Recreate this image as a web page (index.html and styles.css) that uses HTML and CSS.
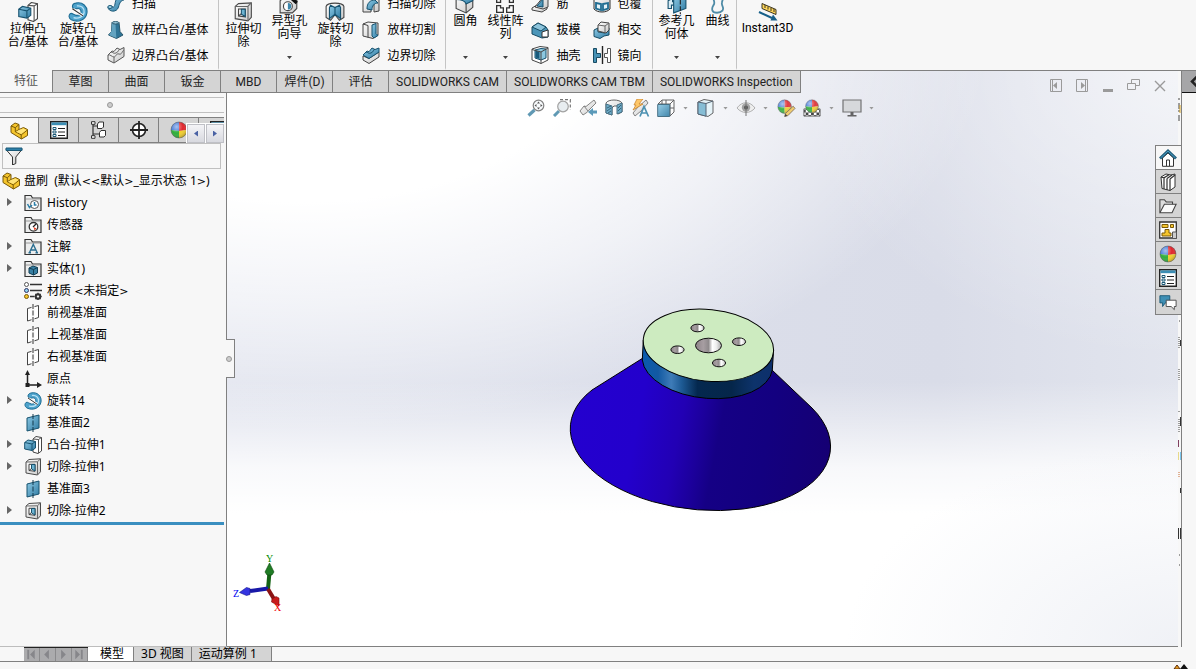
FILE: index.html
```
<!DOCTYPE html>
<html lang="zh-CN">
<head>
<meta charset="utf-8">
<title>盘刷</title>
<link rel="stylesheet" href="styles.css">
</head>
<body>
<svg class="defs" aria-hidden="true">
  <defs>
    <linearGradient id="blue" x1="0" y1="0" x2="1" y2="1"><stop offset="0" stop-color="#8fcbe6"/><stop offset="1" stop-color="#2f7ba3"/></linearGradient>
    <linearGradient id="metal" x1="0" y1="0" x2="1" y2="1"><stop offset="0" stop-color="#fff"/><stop offset="1" stop-color="#c9c9c9"/></linearGradient>
    <clipPath id="ballclip"><circle cx="9" cy="9" r="8"/></clipPath>
    <radialGradient id="shine" cx=".35" cy=".3" r=".8"><stop offset="0" stop-color="#fff" stop-opacity=".55"/><stop offset=".5" stop-color="#fff" stop-opacity="0"/><stop offset="1" stop-color="#000" stop-opacity=".35"/></radialGradient>
    <pattern id="check" width="6" height="6" patternUnits="userSpaceOnUse"><rect width="6" height="6" fill="#fff"/><path d="M0 0h3v3H0zM3 3h3v3H3z" fill="#333"/></pattern>
  </defs>
  <symbol id="boss" viewBox="0 0 18 18"><path d="M9 3l3-2.500 5.500 1V15L14 17.500 9 16z" fill="#fff" stroke="#444"/><path d="M14.500 3.500V17M9 3l5.500 .5 3-2" fill="none" stroke="#555"/><path d="M.7 6.500L4 4l7.500 1.500V12L8 14.500 .7 13z" fill="url(#blue)" stroke="#17526f"/><path d="M.7 6.500L8 8l3.500-2.500M8 8v6.500" fill="none" stroke="#17526f"/></symbol>
  <symbol id="revolve" viewBox="0 0 18 18"><path d="M7 1C13-.5 18 4 17 10 16 16 9 19 3 16 .5 14.500 .5 12 2 10.500 3.500 9.500 5 11.500 7.500 12 10.500 12.300 12.300 10 11.500 7.500 11 6 9.500 5.500 8 6 5.500 6.500 4 5.500 4 4 4 2.500 5.300 1.300 7 1z" fill="#4ea3cc" stroke="#1d6d95"/><path d="M8 3.500c4-.5 7 2 6.500 6-.5 3.500-5 6-9.500 4.500" fill="none" stroke="#b9e2f5" stroke-width="1.200"/><path d="M4.500 6.500L13 12" stroke="#fff" stroke-width="2.500"/><path d="M4 6l9.500 6.500" stroke="#333"/></symbol>
  <symbol id="sweep" viewBox="0 0 18 18"><path d="M1 12c0 5 9 6 10.500 0C12.500 8 14 5 17 5l-1-4C10 1 8.500 5 8 9c-.5 3.500-2.500 4-3 2z" fill="url(#blue)" stroke="#1b5876"/><ellipse cx="3" cy="12" rx="2.200" ry="1.500" fill="#a7d8ec" stroke="#1b5876"/></symbol>
  <symbol id="loft" viewBox="0 0 18 18"><path d="M5 1.500h7l1 9 3 3.500-6.500 3.500L1.500 14 4.500 10.500z" fill="#2f7496" stroke="#29566b"/><path d="M5 2l3.500 1 .8 14-7.300-3L4.500 10z" fill="#63a3c0"/><ellipse cx="8.500" cy="1.800" rx="3.500" ry="1.200" fill="#a2d1e4" stroke="#29566b"/></symbol>
  <symbol id="bound" viewBox="0 0 18 18"><path d="M1 9l4-4 2 .5L10 2l3 1.500L17 1.500v9L7 17 1 14z" fill="url(#metal)" stroke="#555"/><path d="M1 9c2-1 4 2 6 2s2-4 5-3 3-3 5-4M7 11v6M4 6c2 0 2 2 5 1s2-4 4-3.500" fill="none" stroke="#666"/></symbol>
  <symbol id="boundcut" viewBox="0 0 18 18"><path d="M1 10l6 2.500L17 6v5L7 17.500 1 14z" fill="url(#metal)" stroke="#444"/><path d="M1 9l4-4 2 .7L10 2l3 1.500L17 2v4L7 12.500z" fill="url(#blue)" stroke="#17526f"/><path d="M4 6c2 0 2 2 5 1s2-4 4-3.500" fill="none" stroke="#17526f"/></symbol>
  <symbol id="cut" viewBox="0 0 18 18"><path d="M2 4l3-2.500L16.500 .8v13L13.500 17 2 15z" fill="url(#metal)" stroke="#4a4a4a"/><path d="M2 4l11.500-.2L16.500 .8M13.500 4v13" fill="none" stroke="#666"/><path d="M5 6.300h6v7L5 12.500z" fill="#fff" stroke="#444"/><path d="M7.500 6.500H11v6.500l-3.500-2z" fill="#6db4d2" stroke="#17526f"/><path d="M5 12.500l2.500-2" fill="none" stroke="#444"/></symbol>
  <symbol id="hole" viewBox="0 0 18 18"><path d="M1 6l4-3h11v10l-4 4H1z" fill="url(#metal)" stroke="#444"/><circle cx="8" cy="11" r="4" fill="#fff" stroke="#444"/><path d="M8 8a3 3 0 0 1 0 6z" fill="#3b86ac"/><path d="M8 1l8 7" stroke="#111" stroke-width="3"/></symbol>
  <symbol id="revcut" viewBox="0 0 18 18"><path d="M1 4c1-4 15-4 16 0v10l-4 2.500-4-5-4 5L1 14z" fill="url(#metal)" stroke="#444"/><path d="M5 3l4 2 4-2 1 2v10l-5-4-5 4V5z" fill="url(#blue)" stroke="#17526f"/><path d="M9 5v6" stroke="#17526f"/></symbol>
  <symbol id="sweepcut" viewBox="0 0 18 18"><path d="M1 4l4-3h8l4 4v11l-5 1V9l-3 2v6H1z" fill="url(#metal)" stroke="#444"/><path d="M5 14C5 8 8 5 13 5l3 3c-4 0-6 3-6 7z" fill="url(#blue)" stroke="#17526f"/></symbol>
  <symbol id="loftcut" viewBox="0 0 18 18"><path d="M1 3l5-2 10 1v12l-5 3.500L1 15z" fill="url(#metal)" stroke="#444"/><path d="M1 3l5 1.500v12" fill="none" stroke="#444"/><path d="M10 4l4-1.500v10l2 2-4 2.500-2-2z" fill="url(#blue)" stroke="#17526f"/></symbol>
  <symbol id="fillet" viewBox="0 0 18 18"><path d="M1 4l6-3h9v11l-6 5-9-4z" fill="url(#metal)" stroke="#444"/><path d="M1 5l6-4c6 0 9 1 9 5l-6 3C9 6 5 5 1 5z" fill="url(#blue)" stroke="#17526f"/><path d="M10 9v8" stroke="#444"/></symbol>
  <symbol id="pattern" viewBox="0 0 18 18"><g fill="#fff" stroke="#333" stroke-width="1.200"><path d="M1.500 1.500h6v3H5v3H1.500zM10.500 1.500h6v6H13v-3h-2.500z"/><path d="M1.500 10.500H5v2h2.500v4h-6zM13 10.500h3.500v6h-6v-4H13z"/></g></symbol>
  <symbol id="rib" viewBox="0 0 18 18"><path d="M1 13l5-3 10 2v2l-5 3-10-2z" fill="url(#metal)" stroke="#444"/><path d="M4 12L13 1l4 1v10l-5 2z" fill="url(#metal)" stroke="#444"/><path d="M6 11l6-7v8z" fill="url(#blue)" stroke="#17526f"/></symbol>
  <symbol id="draft" viewBox="0 0 18 18"><path d="M1 6l6-4 8 4 2 3v7l-6 1-10-4z" fill="#4b96b9" stroke="#174b63"/><path d="M1 6l6-4 8 4-5 4z" fill="#8cc4dc" stroke="#174b63"/><path d="M11 11l6-2v7h-6z" fill="#fff" stroke="#333"/></symbol>
  <symbol id="shell" viewBox="0 0 18 18"><path d="M1 3l8-2.500 8 1V14l-7 3.500L1 14z" fill="#fff" stroke="#444"/><path d="M4 4l6-1.500 5 .5v9l-5 2-6-2z" fill="#8cc8e0" stroke="#17526f"/><path d="M4.500 4.500l4 1.500v7l-4-1.500z" fill="#185b7d"/><path d="M1 3.500l9 2.500 7-4M10 6v11.500" fill="none" stroke="#444"/></symbol>
  <symbol id="wrap" viewBox="0 0 18 18"><path d="M1 3c2-3 14-3 16 0v11c-3 4-13 4-16 0z" fill="url(#metal)" stroke="#333"/><path d="M3 8l5 1v6l-5-1.500zM10 9l5-1v5.500L10 15z" fill="#e4f2f8" stroke="#1f6d92" stroke-width="1.800"/></symbol>
  <symbol id="intersect" viewBox="0 0 18 18"><path d="M1 9l4-2v4l7 1V8l4-1v7l-5 1-4 2.500-6-2z" fill="url(#blue)" stroke="#174b63"/><path d="M5 4l3-3 8 1v7l-3 3-8-2z" fill="url(#metal)" stroke="#444"/><path d="M5 4l7 1 4-3M12 5v7" fill="none" stroke="#666"/></symbol>
  <symbol id="mirror" viewBox="0 0 18 18"><path d="M.5 2.500h3v5h4v4h-4v5h-3z" fill="#4792b5" stroke="#174b63"/><path d="M9.500 0v18" stroke="#222" stroke-width="1.400"/><path d="M17.500 2.500h-3v5h-3v4h3v5h3z" fill="#fff" stroke="#555"/></symbol>
  <symbol id="refgeo" viewBox="0 0 18 18"><path d="M1 6l4-2v3h3v3H4v3H1z" fill="#d8ecf5" stroke="#17526f"/><path d="M6 4l11-3v12L6 17z" fill="url(#blue)" stroke="#17526f"/><path d="M12 0v18" stroke="#222" stroke-dasharray="4 1.500"/></symbol>
  <symbol id="curve" viewBox="0 0 18 18"><path d="M4.500 0c-1 4 2 6 1 9-1 2-2.500 3-1.500 6 1 2.500 7 2.500 9 0 2-3-1-4-.5-7 .3-3 2.500-5 .5-8" fill="none" stroke="#4e8ba6" stroke-width="1.600"/></symbol>
  <symbol id="instant" viewBox="0 0 20 20"><path d="M4 1.500l14 6v5l-14-6z" fill="#ffd75a" stroke="#3a3420"/><path d="M7 3v3M10 4.500v3M13 6v3M16 7v3" stroke="#3a3420"/><path d="M1 10l13 6" stroke="#17608a" stroke-width="2"/><path d="M12.500 18.500l2.500-6 4.500 6z" fill="#17608a"/></symbol>
  <symbol id="part" viewBox="0 0 18 18"><path d="M1 4l4-3 4 1.500v5l4.500-2 4 2v6L11.500 17 1 10.500z" fill="#f5c52c" stroke="#7a5a08"/><path d="M1 4l4.300 1.700L9 2.500M5.300 5.700v4l5.900 3.200 6.300-5M11.200 13v4M5.300 9.700L9 7.500" fill="none" stroke="#7a5a08"/><path d="M6 9.800l3-1.700 4-1.500 3.500 1.300-5.300 4.200z" fill="#ffe478"/></symbol>
  <symbol id="props" viewBox="0 0 18 18"><path d="M.7 .7h16.600v16.600H.7z" fill="#fff" stroke="#222" stroke-width="1.400"/><path d="M1.400 1.400h15.200v2.800H1.400z" fill="#3c8eb4"/><path d="M3 6.500h3v2H3zM3 10h3v2H3zM3 13.500h3v2H3z" fill="#fff" stroke="#1b5876"/><path d="M8 7.500h7M8 11h7M8 14.500h7" stroke="#222" stroke-width="1.200"/></symbol>
  <symbol id="config" viewBox="0 0 18 18"><path d="M3 2v14M3 5h5M3 13h6" fill="none" stroke="#333" stroke-width="1.200"/><path d="M1.500 .7h3.500v2.600H1.500zM1.500 14.700h3.500v2.600H1.500z" fill="#fff" stroke="#333"/><path d="M7.500 3l1.500-2h4.500v5L12 7.500H7.500zM9.500 11.500l1.500-2h4.500v5L14 16H9.500z" fill="#fff" stroke="#333"/></symbol>
  <symbol id="target" viewBox="0 0 18 18"><circle cx="9" cy="9" r="6.500" fill="#fff" stroke="#222" stroke-width="1.600"/><path d="M9 0v18M0 9h18" stroke="#222" stroke-width="1.800"/></symbol>
  <symbol id="ball" viewBox="0 0 18 18"><g clip-path="url(#ballclip)"><path d="M0 0h9v10L0 9z" fill="#3f76d8"/><path d="M9 0h9v9l-9 1z" fill="#e0262d"/><path d="M0 9l9 1v8H0z" fill="#2fae3a"/><path d="M9 10l9-1v9H9z" fill="#f2cf2b"/></g><circle cx="9" cy="9" r="8" fill="url(#shine)" stroke="#555" stroke-width=".5"/></symbol>
  <symbol id="funnel" viewBox="0 0 18 18"><path d="M1 2.500h16L10.800 10v6.500L7.500 18v-8z" fill="url(#metal)" stroke="#333"/><path d="M1 1h16v2.500H1z" fill="#2c7fa8" stroke="#1b5876"/></symbol>
  <symbol id="folder" viewBox="0 0 18 18"><path d="M1 16.500V1.500h6l1.500 2.500h8.500v12.500z" fill="#eceded" stroke="#333" stroke-width="1.200"/><path d="M2 5h14" stroke="#999"/></symbol>
  <symbol id="history" viewBox="0 0 18 18"><use href="#folder"/><circle cx="10.500" cy="10.500" r="4" fill="#fff" stroke="#555"/><path d="M10.500 8v3h2M3.500 10l2 3.500L8 11" fill="none" stroke="#2c7fa8" stroke-width="1.500"/></symbol>
  <symbol id="sensor" viewBox="0 0 18 18"><use href="#folder"/><circle cx="9.500" cy="10.800" r="4.300" fill="#fff" stroke="#333" stroke-width="1.300"/><path d="M9 11l3-3" stroke="#222" stroke-width="1.300"/><path d="M9.500 11l3 1.500-2 2z" fill="#e6442a"/></symbol>
  <symbol id="note" viewBox="0 0 18 18"><use href="#folder"/><path d="M5.500 14.500L9.300 6.500l3.800 8M7 12h4.500M4.500 14.800h2.500M11.500 14.800H14" fill="none" stroke="#2c6f92" stroke-width="1.400"/></symbol>
  <symbol id="solid" viewBox="0 0 18 18"><use href="#folder"/><path d="M5 8l4-2 4.500 1.500v5.500l-4 2L5 13z" fill="#367fa3" stroke="#123f55"/><path d="M5 8l4.500 1.500 4-2M9.500 9.500V15" fill="none" stroke="#123f55"/></symbol>
  <symbol id="material" viewBox="0 0 18 18"><path d="M6 2.500h12M6 8.500h12M6 14.500h4" stroke="#333" stroke-width="1.500"/><circle cx="2.500" cy="2.500" r="2" fill="#fff" stroke="#555"/><circle cx="2.500" cy="8.500" r="2" fill="#8ed2ee" stroke="#336"/><circle cx="2.500" cy="14.500" r="2" fill="#f5c52c" stroke="#7a5a08"/><circle cx="14" cy="14.500" r="2.200" fill="none" stroke="#333" stroke-width="2"/><path d="M14 10.800v7.400M10.300 14.500h1.500M16.200 14.500h1.500M11.400 11.900l1 1M16.600 11.900l-1 1M11.400 17.100l1-1M16.600 17.100l-1-1" stroke="#333" stroke-width="1.300"/><circle cx="14" cy="14.500" r="1" fill="#fff"/></symbol>
  <symbol id="plane" viewBox="0 0 18 18"><path d="M3.500 4.500l11-3v12l-11 3.500z" fill="#fff" stroke="#444"/><path d="M9 0v18" stroke="#f7f7f7" stroke-width="3"/><path d="M9 0v18" stroke="#333" stroke-dasharray="5 1.500"/></symbol>
  <symbol id="bplane" viewBox="0 0 18 18"><path d="M3 4l12-3v13L3 17z" fill="url(#blue)" stroke="#17526f"/><path d="M9 0v18" stroke="#12394d" stroke-dasharray="5 1.500"/></symbol>
  <symbol id="origin" viewBox="0 0 18 18"><path d="M3.500 4v11H15" fill="none" stroke="#222" stroke-width="1.500"/><path d="M1 5l2.500-5L6 5zM13 12l5 3-5 3z" fill="#222"/><rect x="1.500" y="13" width="4" height="4" fill="#222"/></symbol>
  <symbol id="zoomfit" viewBox="0 0 18 18"><path d="M1.500 16.500l6-5.500" stroke="#4f8eac" stroke-width="3.200"/><circle cx="11.500" cy="6.500" r="5.300" fill="#f8fbfd" stroke="#777" stroke-width="1.200"/><path d="M11.500 2.500l1.500 2h-3zM11.500 10.500l1.500-2h-3zM7.500 6.500l2-1.500v3zM15.500 6.500l-2-1.500v3z" fill="#444"/></symbol>
  <symbol id="zoomarea" viewBox="0 0 18 18"><path d="M7 .7h10.300v10" fill="none" stroke="#666" stroke-width="1.200" stroke-dasharray="3 2"/><path d="M1 17l5-5" stroke="#4f8eac" stroke-width="3"/><circle cx="10" cy="7.500" r="5.300" fill="#e6ecef" stroke="#999" stroke-width="1.200"/></symbol>
  <symbol id="prev" viewBox="0 0 18 18"><path d="M1 12l4-5 2 .5L15 1l2 3-7 7-1.500 2L4 16z" fill="url(#metal)" stroke="#777"/><path d="M5 7l4 5" stroke="#777"/><path d="M18 11.500v3h-4V17l-5-4 5-4v2.500z" fill="#4a90b2"/></symbol>
  <symbol id="section" viewBox="0 0 18 18"><path d="M1 4c2-4 14-4 16 0v9l-4 2V7H9l-2 2v7l-6-2z" fill="url(#metal)" stroke="#555"/><path d="M1 5l6 2v9l-6-2zM12 6l5-2v9l-5 2z" fill="#5fa4c3" stroke="#35637a"/><path d="M2 9l4-2M2 12l4-3M3 14l3-2M13 9l3-3M13 12l3-3" stroke="#24546b"/></symbol>
  <symbol id="dynamic" viewBox="0 0 18 18"><path d="M2 14l5-6L15 1l2 3-7 8-6 5z" fill="url(#metal)" stroke="#777"/><path d="M6 0h6L8 5h4L2 11l3-5H3z" fill="#ffc25a" stroke="#c67a1a" stroke-width=".8"/><path d="M9 17.500l4-10 4.500 10M11 14h5" fill="none" stroke="#3a86aa" stroke-width="1.700"/></symbol>
  <symbol id="orient" viewBox="0 0 18 18"><path d="M1 5l4-4h12v12l-4 4V5z" fill="#fff" stroke="#555"/><path d="M17 1l-4 4M9 1v4M13 9h4M5 1v4" stroke="#555"/><path d="M.7 5.500h12v12H.7z" fill="url(#blue)" stroke="#35637a"/></symbol>
  <symbol id="style" viewBox="0 0 18 18"><path d="M1 3l6-2.500 9 1.500v12l-5 3.500L1 15z" fill="#e4f3f9" stroke="#555"/><path d="M1 3l8 1.500v12.700L1 15z" fill="#7ab7d2" stroke="#456"/><path d="M9 4.500l7-2.500" stroke="#456"/></symbol>
  <symbol id="eye" viewBox="0 0 18 18"><path d="M0 9c5-7 13-7 18 0-5 6-13 6-18 0z" fill="#eee" stroke="#aaa"/><circle cx="9" cy="8.500" r="4.200" fill="#999"/><circle cx="9" cy="8.500" r="2" fill="#444"/><path d="M9 1v16" stroke="#666"/></symbol>
  <symbol id="appear" viewBox="0 0 20 20"><use href="#ball" width="17" height="17"/><path d="M18 8l2 2.500-8 8-3.500 1 1-3.500z" fill="#f2c960" stroke="#765"/><path d="M8.500 19.500l.8-3 2.200 2.200z" fill="#333"/></symbol>
  <symbol id="scene" viewBox="0 0 20 20"><path d="M1 11h18v8H1z" fill="url(#check)" stroke="#555"/><use href="#ball" x="2" width="16" height="16"/></symbol>
  <symbol id="screen" viewBox="0 0 20 18"><path d="M1 1h18v12H1z" fill="#d5d7d9" stroke="#666" stroke-width="1.200"/><path d="M8.500 13h3v3h3v1.500h-9V16h3z" fill="#555"/></symbol>
  <symbol id="home" viewBox="0 0 18 18"><path d="M3.500 9v8.300h11V9L9 4z" fill="#fff" stroke="#333"/><path d="M7.500 17v-6h3v6" fill="none" stroke="#333"/><path d="M1 9.500l8-7.500 8 7.500" fill="none" stroke="#1b5876" stroke-width="2.800"/><path d="M1.500 9l7.500-7 7.500 7" fill="none" stroke="#4a9dc2"/></symbol>
  <symbol id="books" viewBox="0 0 18 18"><path d="M2 4l5-3v0l5 1 4-1v13l-5 3.500-8-2z" fill="#fff" stroke="#333"/><path d="M2 4l3 .8 5-3M5 5v11M8 5.500v11.500M11 6v11.500M8 5.500l5-3.500M11 6l5-4" fill="none" stroke="#333" stroke-width="1.200"/></symbol>
  <symbol id="open" viewBox="0 0 20 18"><path d="M1 16V2h5l2 2.500h7V8" fill="#ddd" stroke="#444" stroke-width="1.200"/><path d="M1 16.500L6 7h13l-4.500 9.500z" fill="#fafafa" stroke="#444" stroke-width="1.200"/></symbol>
  <symbol id="palette" viewBox="0 0 18 18"><path d="M.7 1h16.600v16H.7z" fill="#fff" stroke="#333" stroke-width="1.300"/><path d="M3 3.500h6v3H3zM11.500 3.500h3v3h-3zM6 8.500h4V12h2v3H3v-3h3z" fill="#f5c52c" stroke="#7a5a08"/><path d="M13.500 11h4v6.500h-4z" fill="#ccc" stroke="#555"/></symbol>
  <symbol id="chat" viewBox="0 0 20 18"><path d="M1 2h11v8H7l-3 4v-4H1z" fill="#3f8fb4" stroke="#1b5876"/><path d="M8 7h11v7h-2v3.500L13.500 14H8z" fill="#fff" stroke="#444"/></symbol>
</svg>

<div class="app">
  <header class="ribbon">
    <div class="group">
      <button class="big w50"><svg class="ic"><use href="#boss"/></svg><span>拉伸凸<br>台/基体</span></button>
      <button class="big w50"><svg class="ic"><use href="#revolve"/></svg><span>旋转凸<br>台/基体</span></button>
      <div class="stack">
        <button class="small"><svg class="ic"><use href="#sweep"/></svg>扫描</button>
        <button class="small"><svg class="ic"><use href="#loft"/></svg>放样凸台/基体</button>
        <button class="small"><svg class="ic"><use href="#bound"/></svg>边界凸台/基体</button>
      </div>
    </div>
    <div class="group">
      <button class="big w46"><svg class="ic"><use href="#cut"/></svg><span>拉伸切<br>除</span></button>
      <button class="big w46 drop"><svg class="ic"><use href="#hole"/></svg><span>异型孔<br>向导</span><i class="caret"></i></button>
      <button class="big w46"><svg class="ic"><use href="#revcut"/></svg><span>旋转切<br>除</span></button>
      <div class="stack">
        <button class="small"><svg class="ic"><use href="#sweepcut"/></svg>扫描切除</button>
        <button class="small"><svg class="ic"><use href="#loftcut"/></svg>放样切割</button>
        <button class="small"><svg class="ic"><use href="#boundcut"/></svg>边界切除</button>
      </div>
    </div>
    <div class="group">
      <button class="big w36 drop"><svg class="ic"><use href="#fillet"/></svg><span>圆角</span><i class="caret"></i></button>
      <button class="big w44 drop"><svg class="ic"><use href="#pattern"/></svg><span>线性阵<br>列</span><i class="caret"></i></button>
      <div class="stack">
        <button class="small"><svg class="ic"><use href="#rib"/></svg>筋</button>
        <button class="small"><svg class="ic"><use href="#draft"/></svg>拔模</button>
        <button class="small"><svg class="ic"><use href="#shell"/></svg>抽壳</button>
      </div>
      <div class="stack">
        <button class="small"><svg class="ic"><use href="#wrap"/></svg>包覆</button>
        <button class="small"><svg class="ic"><use href="#intersect"/></svg>相交</button>
        <button class="small"><svg class="ic"><use href="#mirror"/></svg>镜向</button>
      </div>
    </div>
    <div class="group">
      <button class="big w46 drop"><svg class="ic"><use href="#refgeo"/></svg><span>参考几<br>何体</span><i class="caret"></i></button>
      <button class="big w36 drop"><svg class="ic"><use href="#curve"/></svg><span>曲线</span><i class="caret"></i></button>
    </div>
    <div class="group last">
      <button class="big w60 latin"><svg class="ic"><use href="#instant"/></svg><span>Instant3D</span></button>
    </div>
  </header>

  <main class="work">
    <nav class="tabs">
      <button class="tab on">特征</button><button class="tab">草图</button><button class="tab">曲面</button><button class="tab">钣金</button><button class="tab">MBD</button><button class="tab">焊件(D)</button><button class="tab">评估</button><button class="tab">SOLIDWORKS CAM</button><button class="tab">SOLIDWORKS CAM TBM</button><button class="tab">SOLIDWORKS Inspection</button>
    </nav>

    <aside class="side">
      <div class="grip"><i class="dot"></i></div>
      <div class="sidetabs">
        <button class="stab on" aria-label="设计树"><svg class="ic"><use href="#part"/></svg></button>
        <button class="stab" aria-label="属性"><svg class="ic"><use href="#props"/></svg></button>
        <button class="stab" aria-label="配置"><svg class="ic"><use href="#config"/></svg></button>
        <button class="stab" aria-label="尺寸"><svg class="ic"><use href="#target"/></svg></button>
        <button class="stab" aria-label="外观"><svg class="ic"><use href="#ball"/></svg></button>
        <button class="stab" aria-label="更多"><svg class="ic"><use href="#props"/></svg></button>
        <div class="scroll"><button aria-label="向左"><i class="lt"></i></button><button aria-label="向右"><i class="rt"></i></button></div>
      </div>
      <label class="filter"><svg class="ic"><use href="#funnel"/></svg><input type="text" aria-label="过滤"></label>
      <ul class="tree">
        <li class="root"><svg class="ic"><use href="#part"/></svg><span>盘刷&nbsp; (默认<b>&lt;&lt;</b>默认<b>&gt;</b>_显示状态 1<b>&gt;</b>)</span></li>
        <li class="more"><svg class="ic"><use href="#history"/></svg><span>History</span></li>
        <li><svg class="ic"><use href="#sensor"/></svg><span>传感器</span></li>
        <li class="more"><svg class="ic"><use href="#note"/></svg><span>注解</span></li>
        <li class="more"><svg class="ic"><use href="#solid"/></svg><span>实体(1)</span></li>
        <li><svg class="ic"><use href="#material"/></svg><span>材质 <b>&lt;</b>未指定<b>&gt;</b></span></li>
        <li><svg class="ic"><use href="#plane"/></svg><span>前视基准面</span></li>
        <li><svg class="ic"><use href="#plane"/></svg><span>上视基准面</span></li>
        <li><svg class="ic"><use href="#plane"/></svg><span>右视基准面</span></li>
        <li><svg class="ic"><use href="#origin"/></svg><span>原点</span></li>
        <li class="more"><svg class="ic"><use href="#revolve"/></svg><span>旋转14</span></li>
        <li><svg class="ic"><use href="#bplane"/></svg><span>基准面2</span></li>
        <li class="more"><svg class="ic"><use href="#boss"/></svg><span>凸台-拉伸1</span></li>
        <li class="more"><svg class="ic"><use href="#cut"/></svg><span>切除-拉伸1</span></li>
        <li><svg class="ic"><use href="#bplane"/></svg><span>基准面3</span></li>
        <li class="more"><svg class="ic"><use href="#cut"/></svg><span>切除-拉伸2</span></li>
      </ul>
      <div class="rollback"></div>
    </aside>

    <section class="view">
      <div class="winbar">
        <button aria-label="左窗格"><svg viewBox="0 0 14 14"><path d="M1.500 .5h11v12h-11zM3.500 .5v12"/><path class="f" d="M4 6.500l4-3.500v7z"/></svg></button>
        <button aria-label="右窗格"><svg viewBox="0 0 14 14"><path d="M1.500 .5h11v12h-11zM10.500 .5v12"/><path class="f" d="M10 6.500L6 3v7z"/></svg></button>
        <button aria-label="最小化"><svg viewBox="0 0 14 14"><path class="f" d="M2 10h10v3H2z"/></svg></button>
        <button aria-label="还原"><svg viewBox="0 0 14 14"><path d="M.5 4.500h8v6h-8zM4.500 4.500v-4h8v6h-4"/></svg></button>
        <button aria-label="关闭"><svg viewBox="0 0 14 14"><path d="M2 2l10 10M12 2L2 12" stroke-width="1.400"/></svg></button>
      </div>
      <div class="hud">
        <button aria-label="整屏显示"><svg class="ic"><use href="#zoomfit"/></svg></button>
        <button aria-label="局部放大"><svg class="ic"><use href="#zoomarea"/></svg></button>
        <button aria-label="上一视图"><svg class="ic"><use href="#prev"/></svg></button>
        <button aria-label="剖面视图"><svg class="ic"><use href="#section"/></svg></button>
        <button aria-label="动态注解"><svg class="ic"><use href="#dynamic"/></svg></button>
        <button aria-label="视图定向"><svg class="ic"><use href="#orient"/></svg></button><i class="caret"></i>
        <button aria-label="显示样式"><svg class="ic"><use href="#style"/></svg></button><i class="caret"></i>
        <button aria-label="隐藏项目"><svg class="ic"><use href="#eye"/></svg></button><i class="caret"></i>
        <button aria-label="编辑外观"><svg class="ic"><use href="#appear"/></svg></button>
        <button aria-label="应用布景"><svg class="ic"><use href="#scene"/></svg></button><i class="caret"></i>
        <button aria-label="视图设置"><svg class="ic"><use href="#screen"/></svg></button><i class="caret"></i>
      </div>

      <svg class="model" viewBox="569 308 263 204" role="img" aria-label="盘刷模型">
        <defs>
          <linearGradient id="cone" gradientUnits="userSpaceOnUse" x1="570" y1="410" x2="830" y2="460"><stop offset="0" stop-color="#2400cf"/><stop offset=".26" stop-color="#2300cc"/><stop offset=".42" stop-color="#2200b4"/><stop offset=".5" stop-color="#1c009c"/><stop offset=".57" stop-color="#150085"/><stop offset=".75" stop-color="#130080"/><stop offset="1" stop-color="#150073"/></linearGradient>
          <linearGradient id="rim"><stop offset="0" stop-color="#0a5aae"/><stop offset=".12" stop-color="#1259a2"/><stop offset=".22" stop-color="#3e7cb8"/><stop offset=".3" stop-color="#1d5a94"/><stop offset=".42" stop-color="#04284f"/><stop offset=".68" stop-color="#05264a"/><stop offset=".85" stop-color="#0d336b"/><stop offset="1" stop-color="#0d2f6c"/></linearGradient>
          <linearGradient id="bore"><stop offset="0" stop-color="#8d8388"/><stop offset=".3" stop-color="#a79ea2"/><stop offset=".5" stop-color="#8f8a8c"/><stop offset=".65" stop-color="#fff"/><stop offset=".8" stop-color="#eee"/><stop offset="1" stop-color="#aaa"/></linearGradient>
        </defs>
        <path d="M643 358L592 390A130.600 72.200 5.700 1 0 812 408L772 370z" fill="url(#cone)" stroke="#000"/>
        <path d="M643.300 340L642.300 360A65.400 35.800 5.800 0 0 772.300 370L773.600 350z" fill="url(#rim)" stroke="#000"/>
        <ellipse cx="708.400" cy="345.300" rx="65.400" ry="35.800" transform="rotate(5.800 708.400 345.300)" fill="#cdebc0" stroke="#000"/>
        <g fill="url(#bore)" stroke="#111"><ellipse cx="708.500" cy="345.500" rx="13" ry="7.300"/><ellipse cx="697.500" cy="328" rx="6.600" ry="3.800"/><ellipse cx="739" cy="341.700" rx="6.600" ry="3.800"/><ellipse cx="677.500" cy="349.700" rx="6.600" ry="3.800"/><ellipse cx="719" cy="363" rx="6.600" ry="3.800"/></g>
      </svg>

      <svg class="triad" viewBox="231 552 56 62" role="img" aria-label="坐标轴">
        <path d="M268 589L269.500 572" stroke="#146314" stroke-width="4"/><path d="M269.500 563l-4.500 9 2 3h5l2-3z" fill="#207c25" stroke="#0b4a0e" stroke-width=".6"/>
        <path d="M268 588.500L250 591" stroke="#1818a8" stroke-width="4"/><path d="M239.500 592.500l7-5 3.500 1v6l-3.500 1z" fill="#3434e0" stroke="#11118a" stroke-width=".6"/>
        <path d="M268 589l6 10" stroke="#8b1414" stroke-width="4"/><path d="M279 606l-7.500-4 .5-3 4-2.500 3 1.500z" fill="#c81c1c" stroke="#7a0e0e" stroke-width=".6"/>
        <text x="266" y="562" fill="#008a00">Y</text><text x="233" y="597" fill="#0000f0">Z</text><text x="274" y="611" fill="#f00000">X</text>
      </svg>

      <button class="handle" aria-label="折叠面板"><i class="dot"></i></button>
      <nav class="taskpane">
        <button class="on" aria-label="资源"><svg class="ic"><use href="#home"/></svg></button>
        <button aria-label="设计库"><svg class="ic"><use href="#books"/></svg></button>
        <button aria-label="文件探索器"><svg class="ic"><use href="#open"/></svg></button>
        <button aria-label="视图调色板"><svg class="ic"><use href="#palette"/></svg></button>
        <button aria-label="外观"><svg class="ic"><use href="#ball"/></svg></button>
        <button aria-label="自定义属性"><svg class="ic"><use href="#props"/></svg></button>
        <button aria-label="论坛"><svg class="ic"><use href="#chat"/></svg></button>
      </nav>
    </section>

    <div class="sliver"><svg viewBox="0 0 3 575" preserveAspectRatio="xMidYMin slice"><path d="M1 27v23" stroke="#444" stroke-dasharray="2 3 6 1"/><path d="M2 34v8" stroke="#d9a520"/><path d="M1 250h1M1 266v12M1 298v12M1 340v2M1 348v14M1 484h1M1 494h1" stroke="#444" stroke-dasharray="1 1"/><path d="M2.500 269v6M2.500 346v9M2.500 417v5M.5 457v11M2.500 457v11" stroke="#333"/><path d="M.5 369v7" stroke="#804060"/><path d="M2.500 381v8" stroke="#7ac8f0"/><path d="M.5 381v8" stroke="#e7d98a"/><path d="M1 401v6" stroke="#c96a30" stroke-dasharray="1 1"/></svg></div>
    <aside class="edge"><button aria-label="展开"><svg viewBox="0 0 14 20"><path d="M15 4.500l-5 5 5 5" fill="none" stroke="#222" stroke-width="2.500"/></svg></button></aside>
  </main>

  <footer class="bottom">
    <div class="sheetbar">
      <div class="nav">
        <button aria-label="第一个"><svg viewBox="0 0 14 14"><path d="M3 2h2v10H3zM11 2v10L6 7z"/></svg></button>
        <button aria-label="上一个"><svg viewBox="0 0 14 14"><path d="M9 2v10L4 7z"/></svg></button>
        <button aria-label="下一个"><svg viewBox="0 0 14 14"><path d="M5 2v10l5-5z"/></svg></button>
        <button aria-label="最后一个"><svg viewBox="0 0 14 14"><path d="M3 2v10l5-5zM9 2h2v10H9z"/></svg></button>
      </div>
      <button class="sheet on">模型</button><button class="sheet">3D 视图</button><button class="sheet">运动算例 1</button>
    </div>
    <div class="status"><svg viewBox="0 0 26 6"><path d="M4 6l3-4 3 4z" fill="#e8a020" stroke="#5a2a08"/><path d="M10 6l4-5 4 5z" fill="#111"/></svg></div>
  </footer>
</div>
</body>
</html>
```
FILE: styles.css
```
* { box-sizing: border-box; }
html, body { height: 100%; margin: 0; }
body {
  font: 12px/13px "Noto Sans", "Noto Sans CJK SC", sans-serif;
  color: #000;
  background: #f7f7f7;
  overflow: hidden;
}
button {
  font: inherit;
  color: inherit;
  background: none;
  border: 0;
  padding: 0;
  margin: 0;
}
.defs { position: absolute; width: 0; height: 0; }
.ic { display: block; width: 18px; height: 18px; flex: none; }

.app { display: flex; flex-direction: column; height: 100vh; }

/* ribbon */
.ribbon {
  flex: none;
  display: flex;
  align-items: flex-end;
  height: 70px;
  overflow: hidden;
  padding-left: 3px;
}
.group {
  display: flex;
  height: 79px;
  padding-right: 10px;
  margin-right: 1px;
  border-right: 1px solid #c4c4c4;
  border-bottom: 2px solid #f7f7f7;
}
.group:nth-child(4) { padding-right: 0; }
.group.last { border-right: 0; }
.big {
  display: flex;
  flex-direction: column;
  align-items: center;
  padding-top: 11px;
  text-align: center;
  white-space: nowrap;
}
.big .ic { width: 20px; height: 20px; }
.big.drop { padding-top: 3px; }
.w36 { width: 36px; }
.w44 { width: 44px; }
.w46 { width: 46px; }
.w50 { width: 50px; }
.w60 { width: 60px; }
.latin { font-family: Roboto, sans-serif; }
.caret {
  width: 5px;
  height: 3px;
  background: #444;
  clip-path: polygon(0 0, 100% 0, 50% 100%);
}
.big .caret { margin: auto 0 9px; }
.stack { display: flex; flex-direction: column; padding-left: 4px; }
.stack + .stack { padding-left: 12px; }
.small {
  display: flex;
  align-items: center;
  gap: 7px;
  height: 26px;
  white-space: nowrap;
}

/* work area */
.work {
  flex: 1;
  min-height: 0;
  display: grid;
  grid-template-columns: 227px 1fr 3px 15px;
  grid-template-rows: 23px 1fr;
}
.tabs {
  grid-area: 1 / 1 / 2 / 3;
  justify-self: start;
  z-index: 2;
  display: flex;
  font-family: Roboto, "Noto Sans CJK SC", sans-serif;
  color: #222;
  background: #d4d4d4;
  border-right: 1px solid #808080;
}
.tab {
  min-width: 56px;
  padding: 1px 7px 0;
  border: solid #808080;
  border-width: 1px 0 1px 1px;
  white-space: nowrap;
}
.tab.on {
  min-width: 52px;
  color: #555;
  background: #f7f7f7;
  border-width: 0 0 1px;
}

/* feature manager */
.side {
  grid-area: 2 / 1 / 3 / 2;
  display: flex;
  flex-direction: column;
  padding-right: 2px;
  border-right: 1px solid #808080;
  border-bottom: 1px solid #bdbdbd;
  min-height: 0;
}
.grip {
  display: flex;
  align-items: center;
  justify-content: center;
  height: 16px;
  margin: 4px 0;
  padding-right: 4px;
  border: solid #c0c0c0;
  border-width: 1px 0;
}
.dot {
  width: 6px;
  height: 6px;
  border: 1px solid #999;
  border-radius: 50%;
  background: #ccc;
}
.sidetabs {
  position: relative;
  display: flex;
  height: 26px;
  overflow: hidden;
  border-top: 1px solid #808080;
}
.stab {
  flex: none;
  display: flex;
  align-items: center;
  justify-content: center;
  width: 40px;
  background: #d4d4d4;
  border: solid #808080;
  border-width: 0 1px 1px 0;
}
.stab.on { width: 39px; background: #f7f7f7; border-bottom: 0; }
.scroll {
  position: absolute;
  right: 0;
  bottom: 0;
  display: flex;
  gap: 1px;
  padding: 1px 0 0 1px;
  background: #fff;
}
.scroll button {
  display: flex;
  align-items: center;
  justify-content: center;
  width: 18px;
  height: 19px;
  background: linear-gradient(#f4f4f7, #d8d9df);
  border: 1px solid #bfc0c6;
}
.lt, .rt { width: 4px; height: 6px; background: #4a62a4; }
.lt { clip-path: polygon(100% 0, 100% 100%, 0 50%); }
.rt { clip-path: polygon(0 0, 100% 50%, 0 100%); }
.filter {
  display: flex;
  align-items: center;
  height: 26px;
  margin: 0 3px 1px 2px;
  padding-left: 2px;
  border: 1px solid #c0c0c0;
}
.filter input {
  flex: 1;
  min-width: 0;
  border: 0;
  background: none;
  font: inherit;
}
.tree { list-style: none; margin: 0; padding: 0; }
.tree li {
  display: flex;
  align-items: center;
  gap: 5px;
  height: 22px;
  padding-left: 24px;
  white-space: nowrap;
}
.tree span { padding-bottom: 2px; }
.tree b { font: 11px/1px "DejaVu Sans", sans-serif; }
.tree li.root { padding-left: 2px; gap: 4px; }
.tree li.more { padding-left: 7px; gap: 5px; }
.tree li.more::before {
  content: "";
  width: 5px;
  height: 8px;
  margin: 0 7px 2px 0;
  background: #666;
  clip-path: polygon(0 0, 100% 50%, 0 100%);
}
.rollback { height: 3px; background: #3a8fc0; }

/* graphics area */
.view {
  grid-area: 1 / 2 / 3 / 3;
  position: relative;
  border-top: 1px solid #808080;
  border-bottom: 1px solid #808080;
  background:
    radial-gradient(ellipse 35% 35% at 100% 100%, rgba(238,240,245,.9), rgba(238,240,245,0)),
    linear-gradient(to bottom, rgba(255,255,255,0) 54%, rgba(255,255,255,.3) 60%, rgba(255,255,255,.8) 69%, #fff 77%),
    radial-gradient(ellipse 66% 64% at 8% -8%, #fff 48%, rgba(255,255,255,.6) 76%, rgba(255,255,255,0) 110%),
    radial-gradient(ellipse 40% 50% at 100% 0, rgba(255,255,255,.6), rgba(255,255,255,0)),
    linear-gradient(to right, #dfe2ed, #d9dce8 75%, #e2e5ee);
}
.winbar {
  display: flex;
  justify-content: flex-end;
  gap: 12px;
  padding: 8px 11px 0 0;
}
.winbar svg { display: block; width: 14px; height: 14px; fill: none; stroke: #9a9a9a; }
.winbar .f { fill: #9a9a9a; stroke: none; }
.hud {
  display: flex;
  justify-content: center;
  align-items: center;
  height: 20px;
  margin: 5px 3px 0 0;
}
.hud button { display: flex; justify-content: center; width: 26px; }
.hud .ic { width: 20px; opacity: .9; }
.hud .caret { margin: 0 5px 0 4px; background: #999; }
.model {
  position: absolute;
  left: 36%;
  top: 237px;
  width: 263px;
  height: 204px;
}
.triad {
  position: absolute;
  left: 4px;
  bottom: 32px;
  width: 56px;
  height: 62px;
  font: 10px "Liberation Serif", serif;
}
.handle {
  position: absolute;
  left: -1px;
  top: 268px;
  display: flex;
  align-items: center;
  width: 9px;
  height: 39px;
  background: #f7f7f7;
  border: 1px solid #808080;
  border-left: 0;
}
.taskpane {
  position: absolute;
  right: -4px;
  top: 74px;
  display: flex;
  flex-direction: column;
  border: 1px solid #808080;
}
.taskpane button {
  display: flex;
  align-items: center;
  justify-content: center;
  width: 25px;
  height: 24px;
  padding-right: 2px;
  background: #d4d4d4;
  border-bottom: 1px solid #808080;
}
.taskpane button:last-child { border-bottom: 0; }
.taskpane .on { background: #f7f7f7; }

.sliver { grid-area: 1 / 3 / 3 / 4; overflow: hidden; border-top: 1px solid #808080; }
.sliver svg { display: block; width: 3px; height: 575px; }
.edge {
  grid-area: 1 / 4 / 3 / 5;
  border-top: 1px solid #808080;
  border-left: 1px solid #808080;
}
.edge button {
  display: block;
  width: 100%;
  height: 22px;
  background: #a6a6a8;
  border-bottom: 1px solid #111;
}
.edge svg { display: block; width: 14px; height: 20px; }

/* sheet tabs and status */
.bottom { flex: none; }
.sheetbar {
  display: flex;
  height: 15px;
  margin-right: 15px;
  padding-left: 24px;
  border-bottom: 1px solid #808080;
}
.nav { display: flex; border-top: 1px solid #222; background: #ababad; }
.nav button { width: 16px; height: 13px; border: solid #8a8a8c; border-width: 0 1px 0 0; }
.nav svg { display: block; width: 14px; height: 13px; fill: #86868a; }
.sheet {
  height: 14px;
  padding: 0 7px;
  background: #d4d4d4;
  border-right: 1px solid #808080;
  line-height: 14px;
  white-space: nowrap;
}
.sheet.on { background: #fff; padding: 0 9px 0 12px; }
.sheet:last-child { padding-right: 14px; }
.status { display: flex; justify-content: flex-end; align-items: flex-end; height: 7px; }
.status svg { width: 26px; height: 6px; }
```
